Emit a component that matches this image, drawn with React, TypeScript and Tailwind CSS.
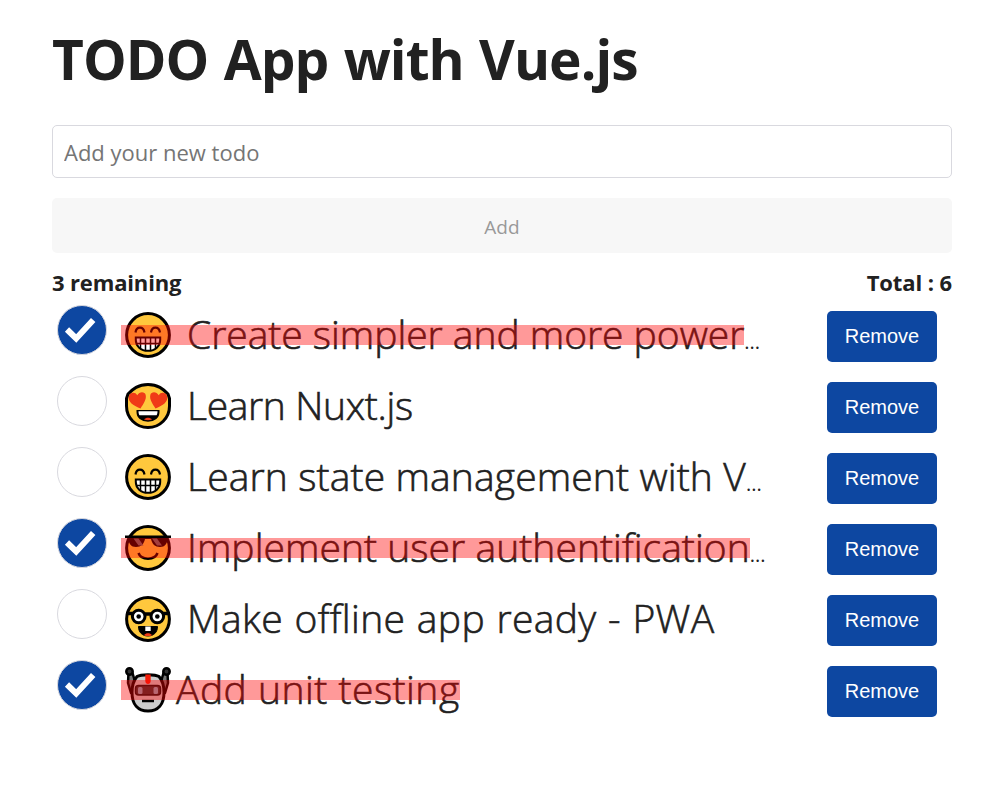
import React, { useState } from "react";

type Face = "grin" | "hearts" | "cool" | "nerd" | "robot";

interface Todo {
  id: number;
  face: Face;
  text: string;
  spacing: string;
  cut: boolean;
  done: boolean;
}

const initialTodos: Todo[] = [
  { id: 1, face: "grin", text: "Create simpler and more power", spacing: "tracking-[-0.03px] ml-[16px]", cut: true, done: true },
  { id: 2, face: "hearts", text: "Learn Nuxt.js", spacing: "tracking-[-0.35px] ml-[16px]", cut: false, done: false },
  { id: 3, face: "grin", text: "Learn state management with V", spacing: "tracking-[0.13px] ml-[16px]", cut: true, done: false },
  { id: 4, face: "cool", text: "Implement user authentification", spacing: "tracking-[0.05px] ml-[16px]", cut: true, done: true },
  { id: 5, face: "nerd", text: "Make offline app ready - PWA", spacing: "tracking-[0.35px] [word-spacing:1px] ml-[16px]", cut: false, done: false },
  { id: 6, face: "robot", text: "Add unit testing", spacing: "tracking-[0.49px] ml-[5px]", cut: false, done: true },
];

function Head() {
  return <circle cx="23" cy="23" r="21.4" fill="#ffc83d" stroke="#000" strokeWidth="3" />;
}

function Emoji({ face }: { face: Face }) {
  return (
    <svg className="block h-[46px] w-[46px] shrink-0 overflow-visible" viewBox="0 0 46 46" fill="none" stroke="#000">
      {face === "grin" && (
        <>
          <Head />
          <path d="M10.500 20.500c.8-6.500 8-6.500 9 0M26 20.500c.8-6.500 8-6.500 9 0" strokeWidth="2.200" />
          <path d="M10.800 25.500h24.400v2.500c0 6-4.900 10.800-12.200 10.800S10.800 34 10.800 28z" fill="#fff" strokeWidth="2" />
          <path d="M11.500 31.500h23M15.500 26v10M20.500 26v12M25.500 26v12M30.500 26v10" strokeWidth="1.500" />
        </>
      )}
      {face === "hearts" && (
        <>
          <path d="M1.500 15.500 3 11C8 6 13 1.600 23 1.600S38 6 43 11l1.500 4.500V23A21.500 21.500 0 0 1 1.500 23z" fill="#ffc83d" strokeWidth="3" strokeLinejoin="round" />
          <path d="M15.500 25.500C9 23 2.500 19 3.800 13.500c1-4.500 6.500-5 8.500-1.300C14.500 8 20 8.500 20.700 12c1 4.500-2.500 9-5.200 13.500zM30.500 25.500C37 23 43.500 19 42.200 13.500c-1-4.500-6.500-5-8.500-1.300C31.500 8 26 8.500 25.300 12c-1 4.500 2.500 9 5.200 13.500z" fill="#f03a17" stroke="none" />
          <path d="M12.500 28h21v1c0 5-4 8.700-10.500 8.700S12.500 34 12.500 29z" fill="#000" strokeWidth="2" />
          <path d="M13.500 28.300h19c0 2-.5 3.500-1 4h-17c-.5-.5-1-2-1-4z" fill="#fff" stroke="none" />
          <path d="M19 36.500c2-2.300 6-2.300 8 0-2.500 1-5.500 1-8 0z" fill="#f03a17" stroke="none" />
        </>
      )}
      {face === "cool" && (
        <>
          <Head />
          <path d="M0 10.500h46v2.500h-3c-1 6-3 9-8 9-5 0-8-3-9-8h-6c-1 5-4 8-9 8s-7-3-8-9H0z" fill="#000" stroke="none" />
          <path d="M8.500 13.500h5l5 7h-5zM27 13.500h5l5 7h-5z" fill="#666" stroke="none" />
          <path d="M13.500 28c2.500 7.500 16.500 7.500 19 0" strokeWidth="2.500" />
        </>
      )}
      {face === "nerd" && (
        <>
          <Head />
          <path d="M1 17.500h8M37 17.500h8M20 18h6" strokeWidth="3.500" />
          <circle cx="13.700" cy="20.500" r="6.300" fill="#fff" strokeWidth="3" />
          <circle cx="32.300" cy="20.500" r="6.300" fill="#fff" strokeWidth="3" />
          <circle cx="13.700" cy="20.500" r="2.300" fill="#000" stroke="none" />
          <circle cx="32.300" cy="20.500" r="2.300" fill="#000" stroke="none" />
          <path d="M13.500 30.500h19c0 6-4 9.500-9.500 9.500s-9.500-3.500-9.500-9.500z" fill="#000" strokeWidth="1" />
          <path d="M20.300 30.500h5.400V35h-5.400z" fill="#fff" stroke="none" />
          <path d="M19 39.200c2-2.600 6-2.600 8 0-2.500 1.200-5.500 1.200-8 0z" fill="#f03a17" stroke="none" />
        </>
      )}
      {face === "robot" && (
        <>
          <path d="M3.500 6h4l3.500 12v8H6L3 16zM42.500 6h-4L35 18v8h5l3-10z" fill="#777" strokeWidth="2.500" strokeLinejoin="round" />
          <circle cx="4.500" cy="4.500" r="3.200" fill="#333" strokeWidth="2.500" />
          <circle cx="41.500" cy="4.500" r="3.200" fill="#333" strokeWidth="2.500" />
          <path d="M12 9.500c4-2.500 18-2.500 22 0 3.500 4 5 9 5 16 0 12-6 18.500-16 18.500S7 37.500 7 25.500c0-7 1.500-12 5-16z" fill="#ccc" strokeWidth="3" />
          <path d="M20.300 7.500h5.400V14c0 4-5.400 4-5.400 0z" fill="#f31c08" stroke="none" />
          <rect x="10.500" y="18.500" width="25" height="9.500" rx="3" fill="#333" stroke="#111" strokeWidth="1.500" />
          <rect x="13" y="20" width="4.500" height="7" rx="1.500" fill="#8ab" stroke="none" />
          <rect x="28.500" y="20" width="4.500" height="7" rx="1.500" fill="#8ab" stroke="none" />
          <path d="M17 34h12" strokeWidth="2.500" />
        </>
      )}
    </svg>
  );
}

export default function App() {
  const [todos, setTodos] = useState(initialTodos);
  const [draft, setDraft] = useState("");

  const toggle = (id: number) =>
    setTodos(todos.map((t) => (t.id === id ? { ...t, done: !t.done } : t)));

  return (
    <main className="min-h-screen w-[1008px] overflow-hidden bg-white pl-[52px] pr-[56px] font-['Open_Sans','Noto_Sans',sans-serif] text-[#212121]">
      <h1 className="mt-[21px] h-[76px] whitespace-nowrap text-[55px] font-bold leading-[76px]">
        <span className="tracking-[-0.95px] [word-spacing:2px]">TODO App with Vue.js</span>
      </h1>
      <input
        className="mt-[28px] block h-[53px] w-full rounded-[5px] border border-[#d9d9df] px-[11px] pt-[1px] text-[22px] outline-none placeholder:text-[#757575]"
        placeholder="Add your new todo"
        value={draft}
        onChange={(e) => setDraft(e.target.value)}
      />
      <button disabled className="mt-[20px] block h-[55px] w-full rounded-[5px] bg-[#f7f7f7] pt-[3px] text-[19px] text-[#999]">
        Add
      </button>
      <div className="mt-[14px] flex h-[31px] justify-between text-[22px] font-bold leading-[30px]">
        <span className="tracking-[-0.15px]">{todos.filter((t) => !t.done).length} remaining</span>
        <span className="tracking-[-0.1px]">Total : {todos.length}</span>
      </div>
      <ul className="mt-[3px]">
        {todos.map((t) => (
          <li key={t.id} className="flex h-[71px] items-start pl-[5px] pr-[15px]">
            <button
              aria-label="Toggle"
              onClick={() => toggle(t.id)}
              className={
                t.done
                  ? "mt-[4px] flex h-[50px] w-[50px] shrink-0 items-center justify-center rounded-full border border-[#d9d9df] bg-[#0d47a1]"
                  : "mt-[4px] flex h-[50px] w-[50px] shrink-0 items-center justify-center rounded-full border border-[#d9d9df] bg-white"
              }
            >
              {t.done && (
                <svg className="h-[50px] w-[50px] shrink-0" viewBox="0 0 50 50">
                  <path d="M10 24.500 19.200 33.500 36.200 15" fill="none" stroke="#fff" strokeWidth="6" />
                </svg>
              )}
            </button>
            <div className="ml-[14px] flex h-[71px] flex-1 items-start whitespace-nowrap">
              <div className="relative flex h-[71px] items-start pl-[4px]">
                <div className="mt-[11px]">
                  <Emoji face={t.face} />
                </div>
                <span className={`${t.spacing} mt-[6px] text-[39px] font-light leading-[54px] [-webkit-text-stroke:0.6px_#212121]`}>{t.text}</span>
                {t.done && <div className="absolute left-0 right-0 top-[24px] h-[20px] bg-[#ff0000]/40" />}
              </div>
              {t.cut && <span className="mt-[27px] text-[20px] leading-[27px]">...</span>}
            </div>
            <button
              onClick={() => setTodos(todos.filter((o) => o.id !== t.id))}
              className="mt-[10px] h-[51px] w-[110px] shrink-0 rounded-[5px] bg-[#0d47a1] pb-[2px] font-['Liberation_Sans',sans-serif] text-[20px] text-white"
            >
              Remove
            </button>
          </li>
        ))}
      </ul>
    </main>
  );
}
